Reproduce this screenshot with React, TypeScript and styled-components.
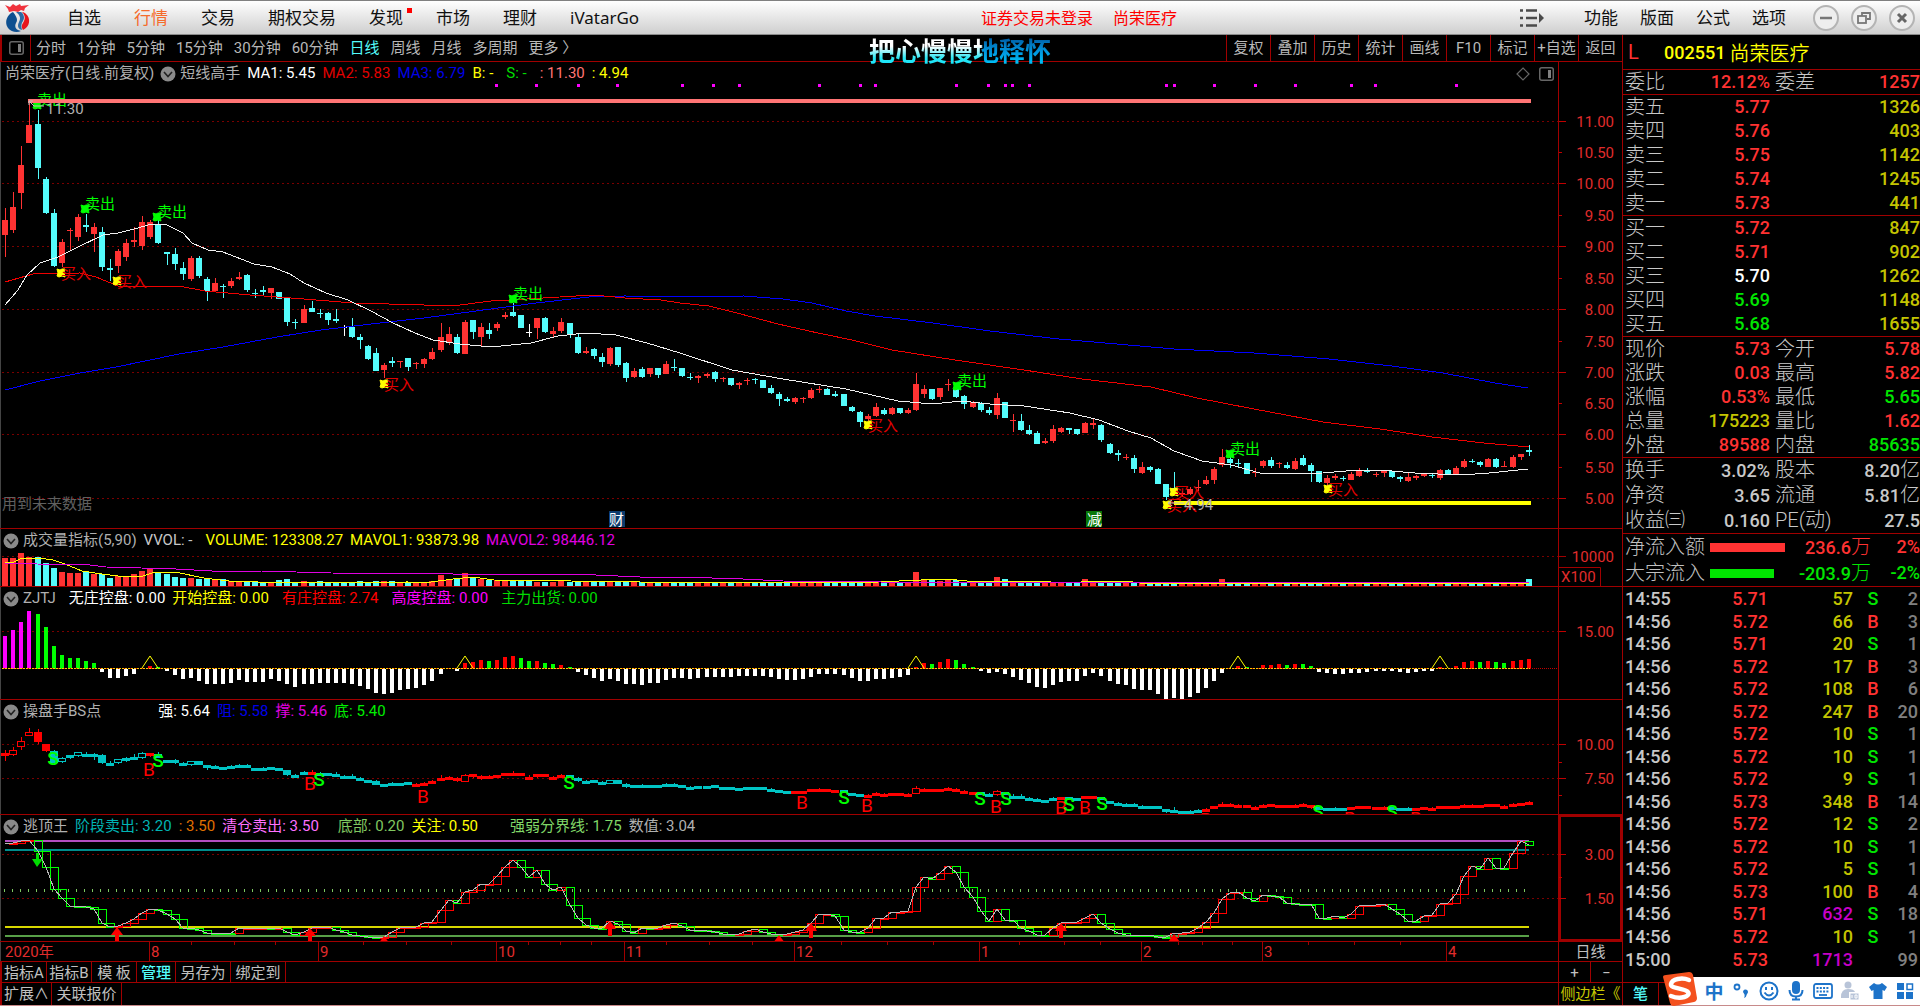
import React from "react";
import styled, { createGlobalStyle } from "styled-components";

/* ---------- palette ---------- */
const LINE = "#a00000";
const UP = "#ff3232";
const DOWN = "#54fcfc";
const GRID = "#7a0000";
const SANS = `Roboto, "Noto Sans CJK SC", "Liberation Sans", sans-serif`;

const Global = createGlobalStyle`
  * { box-sizing: border-box; }
  html, body { margin: 0; background: #000; overflow: hidden; }
  body { font-family: ${SANS}; font-size: 15px; color: #c0c0c0; }
  button { font: inherit; color: inherit; background: none; border: 0; padding: 0; margin: 0; cursor: pointer; white-space: nowrap; }
  svg { display: block; }
`;

/* ---------- market data: [high, body top, body bottom, low, kind] ---------- */
type Candle = [number, number, number, number, string];
const RAW = `208,220,235,257,r 192,207,230,233,r 146,165,193,209,r 102,125,143,143,r 110,124,168,179,c 177,179,213,214,c 209,213,266,267,c 239,242,263,267,r 228,230,231,250,r 214,217,237,241,r
214,225,227,232,c 223,227,234,252,r 227,232,267,271,c 259,268,270,281,c 249,251,266,273,r 239,243,257,261,r 227,240,242,247,r 216,222,246,250,r 220,222,237,239,r 218,224,243,244,c
252,252,254,265,c 248,254,264,270,c 262,268,274,280,c 256,258,279,281,r 256,258,276,278,c 277,279,291,301,c 278,283,291,291,r 284,286,287,298,c 278,281,286,288,r 272,277,279,280,r
274,275,290,292,c 289,293,294,298,c 286,290,292,296,c 288,288,293,299,r 292,292,299,299,c 298,298,322,326,c 319,322,323,329,c 305,309,323,323,r 301,308,312,312,c 309,313,314,318,c
312,313,320,325,c 309,319,321,323,c 325,327,328,336,w 318,327,337,338,c 334,337,340,349,c 345,346,359,360,c 348,353,371,371,c 363,365,370,378,r 357,361,363,367,c 361,361,362,368,r
358,358,367,371,c 362,363,364,369,r 358,359,364,368,r 348,352,359,360,r 323,337,350,352,r 327,334,343,345,r 334,337,353,354,c 320,322,354,354,r 320,320,332,339,c 323,327,337,346,r
323,330,334,339,c 322,324,328,331,r 312,315,317,319,r 303,312,316,317,c 315,315,328,328,c 324,332,333,337,w 318,318,328,339,r 317,318,332,333,c 327,331,334,337,r 318,322,331,333,r
323,323,335,338,c 333,337,353,354,c 347,351,353,354,r 348,349,356,359,c 353,357,362,367,c 347,348,364,366,r 347,347,365,367,c 362,363,378,382,c 368,371,377,378,r 367,369,377,378,c
368,368,374,377,r 368,368,375,378,c 361,364,374,374,r 359,367,368,371,c 368,368,376,377,c 373,377,378,380,c 375,376,378,383,r 373,374,376,378,r 371,372,379,382,c 377,378,379,382,r
378,378,385,386,c 382,383,385,389,r 378,380,381,385,r 378,379,380,384,c 380,380,388,388,c 385,388,393,394,c 392,394,399,406,c 397,399,401,402,c 397,398,402,404,r 397,398,399,403,r
388,390,398,399,r 386,389,390,393,r 388,389,395,395,c 391,394,396,397,c 394,394,406,406,c 406,407,411,412,c 411,412,422,427,c 414,416,419,421,r 403,407,416,417,r 408,410,414,415,c
407,408,414,415,r 408,408,413,414,c 408,410,413,414,r 373,384,410,411,r 385,389,394,398,r 389,389,399,400,c 388,388,397,400,r 379,384,385,391,r 383,389,397,398,c 395,396,404,409,c
401,402,407,408,r 402,403,410,412,c 407,410,413,415,c 393,398,415,419,r 402,402,418,418,c 414,420,421,432,r 414,421,430,431,c 425,430,434,435,c 431,433,444,444,c 438,441,443,444,r
425,429,441,443,r 427,428,432,433,r 428,428,430,434,c 429,429,434,435,c 422,423,433,433,r 419,423,425,429,r 424,425,440,442,c 443,444,453,454,c 450,453,455,461,c 454,457,458,460,r
455,458,469,473,c 462,467,473,474,r 466,467,470,472,c 468,469,484,484,c 484,484,497,500,c 472,488,492,493,c 491,493,494,497,r 487,489,494,495,r 480,487,488,491,r 476,480,484,485,r
467,469,480,484,r 449,457,465,467,r 453,459,463,468,c 459,463,464,468,c 463,463,474,474,c 468,472,473,477,r 460,461,466,468,r 457,460,466,468,c 462,463,464,468,r 462,465,468,469,c
458,461,469,470,r 455,458,465,466,c 463,465,471,482,c 471,471,482,483,c 475,478,483,487,r 474,476,478,480,r 476,478,479,481,c 472,474,480,480,r 468,470,476,477,r 468,470,472,473,c
472,474,475,477,r 470,471,473,477,r 471,471,477,478,c 476,477,479,482,c 472,477,481,482,r 475,476,478,480,r 473,474,476,477,r 473,475,476,478,c 469,470,478,480,r 469,470,474,475,c
466,468,474,475,r 459,461,467,468,r 459,461,462,463,c 461,462,465,467,c 458,459,467,467,r 458,459,467,468,c 461,466,467,467,r 455,457,467,468,r 454,454,457,460,r 445,450,452,456,c`;
const CANDLES: Candle[] = RAW.trim().split(/\s+/).map((s) => {
  const p = s.split(",");
  return [+p[0], +p[1], +p[2], +p[3], p[4]];
});
const xAt = (i: number) => Math.round(5.3 + 8.06 * i);

const MA1 = "5,305 18,290 27,275 40,263 58,257 76,248 103,235 118,233 134,229 152,224 167,225 183,233 192,243 208,250 223,252 254,264 272,267 290,274 304,283 326,293 348,300 371,311 393,323 415,333 433,340 460,344 491,347 531,343 558,336 585,333 616,335 647,343 680,353 732,370 783,379 846,389 898,401 933,404 961,401 990,404 1024,406 1070,413 1099,420 1128,431 1151,438 1174,451 1202,461 1231,465 1260,473 1288,474 1323,473 1357,470 1380,470 1415,473 1461,475 1489,473 1528,469";
const MA2 = "5,282 33,274 80,273 96,277 118,286 179,286 205,291 250,295 304,299 353,303 424,305 460,305 491,301 527,299 576,296 594,295 625,298 661,300 680,303 709,306 737,313 778,324 818,333 852,340 892,350 955,360 1024,370 1082,379 1151,387 1197,398 1254,409 1323,422 1380,429 1432,437 1484,443 1529,447";
const MA3 = "5,390 40,381 80,373 116,367 179,354 223,347 277,337 321,330 371,324 424,318 491,309 536,303 589,297 625,296 702,297 744,296 783,299 812,303 846,311 875,316 933,323 990,331 1059,339 1174,349 1254,353 1329,359 1392,366 1443,373 1495,383 1528,388";
const DOTS = [496, 536, 578, 617, 682, 713, 739, 819, 860, 875, 956, 988, 1005, 1012, 1029, 1166, 1174, 1214, 1255, 1295, 1351, 1375, 1456];
const SELLS = [[37, 105], [85, 209], [157, 217], [513, 299], [957, 386], [1230, 454]];
const BUYS = [[61, 273], [117, 281], [384, 384], [868, 425], [1174, 492], [1167, 505], [1328, 489]];

const VOL_HEAD = [28, 28, 33, 29, 29, 23, 18, 14, 13, 13, 14, 12, 12, 8, 10, 10, 12, 15, 17, 14, 12, 9, 8, 8, 7, 7, 6, 7, 5, 4, 5, 4, 3, 4, 6, 7, 4, 5, 4, 5, 4, 4, 3, 4, 5, 4, 5, 5, 5, 4, 4, 4, 4, 5, 11, 7, 7, 13, 9, 7, 6, 6, 6, 6, 5, 5];
const VOL_PEAKS: Record<number, number> = { 113: 14, 114: 6, 115: 6, 116: 5, 117: 7, 118: 6, 123: 9, 124: 7, 134: 7, 135: 5, 151: 7, 189: 7 };
const volumeAt = (i: number) => VOL_HEAD[i] ?? VOL_PEAKS[i] ?? 3 + ((i * 5) % 3 === 0 ? 1 : 0) + (i > 66 && i < 80 ? 1 : 0);
const MAVOL1 = "5,563 14,562 20,559 38,558 53,560 65,564 82,571 102,574 118,576 143,576 155,572 175,572 204,578 229,581 286,583 408,582 424,583 453,579 473,577 494,580 571,581 640,582 680,583 800,582 878,582 921,580 947,579 967,581 1041,581 1060,583 1102,581 1125,581 1140,583 1529,583";
const MAVOL2 = "5,563 37,564 90,565 106,567 176,569 212,571 261,571 331,573 453,574 596,575 640,577 680,577 743,579 783,581 881,582 1529,582";

const CONTROL = `33m 39m 47m 58m 55g 42g 23g 14g 11g 11g 8g 6g -3 -9 -9 -7 -5 0 3r 2g -2 -6 -10 -9 -12 -15 -15 -15 -14 -11 -13 -13 -13 -10 -12 -15 -18 -15 -15 -14 -14 -14 -14 -15 -17 -20 -24 -25 -24 -21 -20 -19 -16 -12 -5 0 -2 6r 7r 9r 8g 9r 12r 13r 11g 8g 8r 6g 5g 4r 2g -3 -6 -9 -12 -10 -12 -15 -15 -16 -14 -14 -11 -9 -9 -10 -9 -8 -8 -8 -8 -7 -7 -7 -7 -8 -10 -11 -11 -10 -8 -5 -5 -5 -6 -9 -12 -12 -10 -10 -9 -8 -6 2r 6r 5g 7r 10r 9g 5g 2g -2 -4 -3 -5 -8 -11 -14 -18 -19 -16 -13 -12 -12 -7 -4 -7 -12 -15 -16 -20 -21 -21 -25 -30 -29 -30 -28 -24 -19 -12 -4 0 3r 2g 0 4r 4r 5r 4g 5r 5g 3g -3 -4 -5 -5 -4 -4 -3 -2 -2 -2 -3 -4 -3 -2 -2 2r 0 3r 7r 8r 7g 8r 7g 6g 8r 9r 10r`.split(" ");
const CONTROL_COLORS: Record<string, string> = { m: "#f0f", g: "#0f0", r: "#f00" };
const PEAKS = [18, 57, 113, 153, 178];

const BS_RED = [[0, 5], [18, 18], [38, 38], [51, 69], [98, 103], [107, 120], [123, 123], [131, 131], [134, 135], [149, 162], [167, 171], [175, 189]];
const B_MARKS = [[149, 769], [310, 783], [423, 796], [802, 802], [867, 805], [996, 806], [1061, 807], [1085, 807], [1206, 819], [1350, 818], [1416, 818]];
const S_MARKS = [[53, 758], [158, 760], [319, 779], [569, 782], [844, 797], [980, 798], [1006, 798], [1069, 804], [1102, 803], [1318, 811], [1392, 811]];

const ESCAPE = [27, 27, 25, 24, 35, 51, 73, 82, 90, 90, 91, 93, 107, 111, 110, 107, 103, 97, 93, 94, 98, 103, 112, 112, 114, 117, 117, 117, 117, 112, 112, 112, 112, 113, 112, 116, 119, 116, 112, 111, 111, 114, 116, 119, 120, 121, 122, 121, 116, 112, 111, 111, 107, 106, 94, 84, 87, 76, 74, 68, 68, 60, 51, 44, 51, 61, 54, 68, 74, 71, 89, 102, 109, 112, 112, 105, 108, 115, 117,
  112, 113, 112, 109, 107, 110, 114, 114, 115, 116, 118, 119, 118, 115, 113, 116, 118, 119, 118, 116, 114, 107, 98, 98, 100, 114, 116, 116, 112, 102, 102, 96, 96, 95, 71, 61, 63, 57, 50, 56, 71, 81, 95, 105, 93, 104, 104, 112, 115, 119, 119, 112, 107, 106, 106, 102, 98, 107, 113, 117, 119, 119, 119, 119, 121, 121, 117, 117, 116, 112, 106, 97, 83, 77, 76, 82, 85, 79, 80, 81, 87, 88, 88, 88, 102, 102, 100, 102, 98, 90, 89, 89, 88, 93, 98, 105, 105, 100, 99, 88, 87, 78, 60, 50, 53, 42, 52, 52, 37, 25, 29].map((v) => v + 816);
const ARROWS = [[117, 927, 941], [310, 928, 941], [384, 936, 941], [610, 921, 936], [779, 935, 941], [811, 923, 938], [1061, 923, 938], [1174, 934, 941]];

/* ---------- layout ---------- */
const App_ = styled.div`
  height: 100vh; display: flex; flex-direction: column; background: #000; border-bottom: 1px solid #c88a8a;
`;
const TitleBar = styled.header`
  height: 35px; flex: none; display: flex; align-items: center; padding: 0 5px;
  background: linear-gradient(#fff, #e4e4e4 55%, #cfcfcf); border-top: 1px solid #808080; border-bottom: 1px solid #8a8a8a;
  color: #111; font-family: "Noto Sans", "Noto Sans CJK SC", sans-serif; font-size: 17px; line-height: 24px;
`;
const Menu = styled.nav`display: flex; gap: 33px; margin-left: 36px;`;
const MenuItem = styled.button<{ $on?: boolean; $dot?: boolean }>`
  position: relative; color: ${(p) => (p.$on ? "#f56b2c" : "#111")};
  ${(p) => p.$dot && `&::after { content: ""; position: absolute; right: -9px; top: 2px; width: 5px; height: 5px; background: #f00; }`}
`;
const Notice = styled.div`
  flex: 1; display: flex; justify-content: center; gap: 20px; color: #f00; font-size: 16px;
`;
const RightMenu = styled.nav`display: flex; gap: 22px; margin-left: 39px;`;
const WinButtons = styled.div`display: flex; gap: 12px; margin-left: 27px;`;
const WinButton = styled.button`
  width: 26px; height: 26px; border-radius: 50%; border: 2px solid #b4b4b4; background: #eee;
  display: grid; place-items: center;
`;
const Body = styled.div`flex: 1; min-height: 0; display: flex;`;
const Left = styled.main`flex: 1; min-width: 0; display: flex; flex-direction: column; box-shadow: inset 1px 0 #444;`;

const Toolbar = styled.div`
  height: 27px; flex: none; display: flex; border-bottom: 1px solid ${LINE}; border-left: 2px solid ${LINE}; line-height: 26px;
`;
const IconCell = styled.button`width: 29px; display: grid; place-items: center; border-right: 1px solid ${LINE};`;
const Periods = styled.div`display: flex; gap: 11px; padding-left: 5px; flex: 1;`;
const Period = styled.button<{ $on?: boolean }>`color: ${(p) => (p.$on ? DOWN : "#b8b8b8")};`;
const Tool = styled.button`width: 44px; border-left: 1px solid ${LINE}; color: #b8b8b8;`;

const LyricLayer = styled.div`
  position: absolute; left: 0; right: 0; top: 31px; display: flex; justify-content: center; pointer-events: none;
`;
const Lyric = styled.span`
  font: 700 26px/38px "Noto Sans CJK SC", sans-serif; color: transparent;
  background: linear-gradient(#fff 40%, #2fe8f4 70%, #00e0ff) left / 62% 100% no-repeat,
    linear-gradient(#0060a8 20%, #0098e0 55%, #00d0ff) right / 38% 100% no-repeat;
  background-clip: text; -webkit-background-clip: text;
`;

const Pane = styled.section<{ $h?: number }>`
  ${(p) => (p.$h ? `height: ${p.$h}px; flex: none;` : "flex: 1; min-height: 0;")}
  display: flex; border-bottom: 1px solid ${LINE};
`;
const PaneBody = styled.div`
  flex: 1; min-width: 0; display: grid; grid-template: minmax(0, 1fr) / minmax(0, 1fr);
  & > * { grid-area: 1 / 1; }
`;
const PlotSvg = styled.svg`width: 100%; height: 100%; overflow: hidden; font-family: ${SANS};`;
const Axis = styled.aside<{ $picked?: boolean }>`
  width: 64px; flex: none; border-left: 1px solid ${LINE};
  ${(p) => p.$picked && `box-shadow: inset 0 0 0 2px ${LINE};`}
`;
const PaneHead = styled.div`
  display: flex; align-items: center; align-self: start; height: 23px; white-space: pre; line-height: 23px; z-index: 1;
  padding-left: 3px;
`;
const Name = styled.span<{ $pad?: number }>`color: #b0b0b0; margin-left: ${(p) => p.$pad ?? 4}px;`;
const Reading = styled.span<{ $c: string; $gap?: number }>`color: ${(p) => p.$c}; margin-left: ${(p) => p.$gap ?? 7}px;`;
const HeadTools = styled.div`margin-left: auto; display: flex; gap: 9px; padding-right: 4px; align-items: center;`;
const FoldButton = styled.button<{ $gap?: number }>`margin-left: ${(p) => p.$gap ?? 0}px;`;

const Strip = styled.div<{ $h: number }>`
  height: ${(p) => p.$h}px; flex: none; display: flex; border-bottom: 1px solid ${LINE}; line-height: ${(p) => p.$h + 1}px;
  &:last-child { border-bottom: 0; }
`;
const StripBody = styled.div`flex: 1; min-width: 0; display: flex; border-left: 2px solid ${LINE};`;
const Tab = styled.button<{ $w: number; $on?: boolean }>`
  width: ${(p) => p.$w}px; border-right: 1px solid ${LINE}; color: ${(p) => (p.$on ? DOWN : "#c0c0c0")};
  font-weight: ${(p) => (p.$on ? 500 : 400)};
`;
const Corner = styled.div`width: 64px; flex: none; display: flex; justify-content: center; border-left: 1px solid ${LINE};`;
const Zoom = styled.button`flex: 1; & + & { border-left: 1px solid ${LINE}; }`;
const Side = styled.button`color: #c8c800;`;

/* ---------- quote panel ---------- */
const Quote = styled.aside`
  width: 298px; flex: none; border-left: 1px solid ${LINE}; display: flex; flex-direction: column; font-size: 18px; font-weight: 500;
`;
const Stock = styled.h1`
  height: 35px; flex: none; margin: 0; display: flex; align-items: center; border-bottom: 1px solid ${LINE};
  font-size: 18px; font-weight: 500; color: #ff0; padding-left: 5px;
`;
const Flag = styled.span`color: ${UP}; font-size: 20px; font-weight: 400; width: 36px;`;
const StockName = styled.span`font-size: 20px; font-weight: 350; margin-left: 4px;`;
const Sheet = styled.table`
  width: 100%; flex: none; border-collapse: separate; border-spacing: 0; table-layout: fixed; border-bottom: 1px solid ${LINE};
  th, td { padding: 0; white-space: nowrap; text-align: right; overflow: visible; }
  th { text-align: left; font-size: 20px; font-weight: 300; color: #c8c8c8; padding-left: 2px; }
  td + th { padding-left: 5px; }
`;
const Row = styled.tr<{ $h: number }>`height: ${(p) => p.$h}px; line-height: ${(p) => p.$h}px;`;
const Val = styled.td<{ $c: string }>`color: ${(p) => p.$c};`;
const Unit = styled.span`font-size: 20px; font-weight: 300;`;
const FlowRow = styled.div`height: 26px; display: flex; align-items: center; padding-left: 2px; line-height: 26px;`;
const FlowBox = styled.div`border-bottom: 1px solid ${LINE}; flex: none;`;
const FlowName = styled.span`font-size: 20px; font-weight: 300; width: 85px;`;
const FlowBar = styled.span<{ $c: string }>`height: 9px; background: ${(p) => p.$c};`;
const FlowVal = styled.span<{ $c: string }>`margin-left: auto; color: ${(p) => p.$c};`;
const FlowPct = styled.span<{ $c: string }>`width: 49px; text-align: right; color: ${(p) => p.$c};`;
const Ticks = styled.div`flex: 1; min-height: 0; display: flex; padding: 1px 0 11px;`;
const TickTable = styled.table`
  flex: 1; border-collapse: collapse; table-layout: fixed; line-height: 20px;
  td { padding: 0; text-align: right; }
  td:first-child { text-align: left; padding-left: 2px; color: #c8c8c8; }
  td:nth-child(4) { text-align: center; }
  td:last-child { padding-right: 2px; color: #808080; }
`;
const PenTab = styled.button`width: 36px; color: ${DOWN}; border-right: 1px solid ${LINE};`;
const PenRow = styled.div`height: 23px; flex: none; border-top: 1px solid ${LINE}; display: flex; font-size: 15px; line-height: 23px;`;

const Ime = styled.div`
  position: absolute; right: 0; bottom: 1px; height: 28px; width: 249px; background: #fff; display: flex; align-items: center;
  justify-content: space-between; padding: 0 3px 0 31px; color: #1d73c9;
`;
const ImeLogo = styled.svg`position: absolute; left: -9px; bottom: -1px;`;
const ImeButton = styled.button`width: 24px; height: 24px; display: grid; place-items: center; font: 700 19px/24px "Noto Sans CJK SC", sans-serif;`;

/* ---------- drawing helpers ---------- */
const Plot = ({ top, children }: { top: number; children: React.ReactNode }) => (
  <PlotSvg><g transform={`translate(0 ${-top})`}>{children}</g></PlotSvg>
);
const Grid = ({ ys }: { ys: number[] }) => (
  <>{ys.map((y) => <line key={y} x1="2" x2="1558" y1={y + 0.5} y2={y + 0.5} stroke={GRID} strokeDasharray="2 3" shapeRendering="crispEdges" />)}</>
);
const AxisPlot = ({ top, marks, minor = [] }: { top: number; marks: [number, string][]; minor?: number[] }) => (
  <Plot top={top}>
    {marks.map(([y, t]) => (
      <g key={y}>
        <line x1="0" x2={t.endsWith(".50") && top === 62 ? 3 : 7} y1={y + 0.5} y2={y + 0.5} stroke="#c00000" />
        <text x="55" y={y + 6} textAnchor="end" fill="#e02c2c" fontSize="15">{t}</text>
      </g>
    ))}
    {minor.map((y) => <line key={y} x1="0" x2="3" y1={y + 0.5} y2={y + 0.5} stroke="#c00000" />)}
  </Plot>
);
const Curve = ({ pts, c }: { pts: string; c: string }) => (
  <polyline points={pts} fill="none" stroke={c} strokeWidth="1" shapeRendering="crispEdges" />
);
const Fold = ({ gap }: { gap?: number }) => (
  <FoldButton $gap={gap} aria-label="指标菜单">
    <svg width="16" height="16" viewBox="0 0 16 16"><circle cx="8" cy="8" r="7.5" fill="#8a8a8a" /><path d="M4 6l4 4.5L12 6" fill="none" stroke="#222" strokeWidth="1.6" /></svg>
  </FoldButton>
);
const PanelGlyph = () => (
  <svg width="15" height="14" viewBox="0 0 15 14"><rect x=".75" y=".75" width="13.5" height="12.5" rx="2" fill="none" stroke="#666" strokeWidth="1.5" /><rect x="9" y="3" width="3" height="8" fill="#808080" /></svg>
);
const Burst = ({ x, y, c }: { x: number; y: number; c: string }) => (
  <path transform={`translate(${x} ${y})`} d="M-4-4L-1-3L1-4L4-4L3-1L4 4L1 3L-2 4L-4 3L-3 0Z" fill={c} stroke={c} strokeWidth="1" />
);

const MainPlot = () => (
  <Plot top={62}>
    <Grid ys={[121, 183, 246, 309, 372, 434, 498]} />
    {DOTS.map((x) => <rect key={x} x={x - 1} y="84" width="3" height="3" fill="#f0f" />)}
    <g shapeRendering="crispEdges">
      {CANDLES.map(([h, t, b, l, k], i) => {
        const c = k === "r" ? UP : k === "c" ? DOWN : "#fff";
        const x = xAt(i);
        return <g key={i} fill={c}><rect x={x} y={h} width="1" height={Math.max(1, l - h)} /><rect x={x - 3} y={t} width="6" height={Math.max(1, b - t)} /></g>;
      })}
    </g>
    <Curve pts={MA3} c="#0000ff" />
    <Curve pts={MA2} c="#f00000" />
    <Curve pts={MA1} c="#f0f0f0" />
    {SELLS.map(([x, y]) => <g key={x}><Burst x={x} y={y} c="#0f0" /><text x={x} y={y} fill="#0f0" fontSize="15">卖出</text></g>)}
    {BUYS.map(([x, y]) => <g key={x}><Burst x={x} y={y} c="#ff0" /><text x={x} y={y + 6} fill="#e00000" fontSize="15">买入</text></g>)}
    <rect x="28" y="99" width="1503" height="4" fill="#ff7474" />
    <rect x="1174" y="501" width="357" height="4" fill="#ff0" />
    <path d="M29 101l5 5M29 101h4M29 101v4M34 106h10" stroke="#c0c0c0" fill="none" />
    <path d="M1168 503h16M1168 503l4-3M1168 503l4 3" stroke="#c0c0c0" fill="none" />
    <text x="46" y="114" fill="#b0b0b0" fontSize="15">11.30</text>
    <text x="1184" y="510" fill="#b0b0b0" fontSize="15">4.94</text>
    <text x="2" y="509" fill="#606060" fontSize="15">用到未来数据</text>
    <rect x="609" y="511" width="16" height="16" fill="#0c3c6e" />
    <text x="609" y="525" fill="#fff" fontSize="15">财</text>
    <rect x="1086" y="511" width="16" height="16" fill="#087808" />
    <text x="1087" y="525" fill="#fff" fontSize="15">减</text>
  </Plot>
);

const VolumePlot = () => (
  <Plot top={529}>
    <Grid ys={[556]} />
    <g shapeRendering="crispEdges">
      {CANDLES.map((k, i) => <rect key={i} x={xAt(i) - 3} y={586 - volumeAt(i)} width="6" height={volumeAt(i)} fill={k[4] === "r" ? UP : DOWN} />)}
    </g>
    <Curve pts={MAVOL1} c="#ff0" />
    <Curve pts={MAVOL2} c="#e000e0" />
  </Plot>
);

const ControlPlot = () => (
  <Plot top={587}>
    <Grid ys={[631]} />
    <g shapeRendering="crispEdges">
      {CONTROL.map((s, i) => {
        const v = parseInt(s, 10);
        const c = CONTROL_COLORS[s.slice(-1)] ?? "#fff";
        return v === 0 ? null : <rect key={i} x={xAt(i) - 2} y={v > 0 ? 669 - v : 669} width="4" height={Math.abs(v)} fill={c} />;
      })}
      <line x1="2" x2="1558" y1="668.5" y2="668.5" stroke="#c00000" strokeDasharray="1 1" />
      <line x1="2" x2="1530" y1="668.5" y2="668.5" stroke="#ffc800" strokeDasharray="2 1" />
    </g>
    {PEAKS.map((i) => <path key={i} d={`M${xAt(i) - 8} 668L${xAt(i)} 656L${xAt(i) + 8} 668`} fill="none" stroke="#ff0" />)}
  </Plot>
);

const bsY = (y: number) => Math.round(745 + (y - 183.5) * 0.2145);
const BsPlot = () => (
  <Plot top={700}>
    <Grid ys={[744, 778]} />
    <g shapeRendering="crispEdges">
      {CANDLES.map(([h, t, b, l, k], i) => {
        const c = BS_RED.some(([a, z]) => i >= a && i <= z) ? "#f00" : "#00c4c4";
        const x = xAt(i);
        const height = Math.max(3, bsY(b) - bsY(t));
        const hollow = k === "r" && height > 3;
        return (
          <g key={i}>
            <rect x={x} y={bsY(h)} width="1" height={Math.max(2, bsY(l) - bsY(h))} fill={c} />
            {hollow
              ? <rect x={x - 3.5} y={bsY(t) + 0.5} width="7" height={height - 1} fill="#000" stroke={c} />
              : <rect x={x - 4} y={bsY(t)} width="8" height={height} fill={c} />}
          </g>
        );
      })}
    </g>
    {B_MARKS.map(([x, y]) => <text key={x} x={x} y={y + 7} textAnchor="middle" fill="#f00" fontSize="19">B</text>)}
    {S_MARKS.map(([x, y]) => <text key={x} x={x} y={y + 7} textAnchor="middle" fill="#0f0" fontSize="19" fontWeight="500">S</text>)}
  </Plot>
);

const EscapePlot = () => {
  let tone = "#f00";
  return (
    <Plot top={815}>
      <Grid ys={[854, 898]} />
      <rect x="5" y="840" width="1524" height="2" fill="#b44ec0" />
      <rect x="5" y="849" width="1524" height="2" fill="#008c8c" />
      <line x1="4" x2="1529" y1="890.5" y2="890.5" stroke="#7cc860" strokeWidth="3" strokeDasharray="1 7" shapeRendering="crispEdges" />
      <rect x="5" y="926" width="1524" height="2" fill="#d8d800" />
      <rect x="5" y="935" width="1524" height="2" fill="#58a048" />
      <g shapeRendering="crispEdges" fill="none">
        {ESCAPE.map((y, i) => {
          if (i === 0) return null;
          const p = ESCAPE[i - 1];
          if (y < p) tone = "#f00";
          if (y > p) tone = "#0f0";
          return <rect key={i} x={xAt(i) - 3.5} y={Math.min(y, p) + 0.5} width="8" height={Math.max(1, Math.abs(y - p))} stroke={tone} />;
        })}
      </g>
      <Curve pts={ESCAPE.map((y, i) => `${xAt(i)},${y}`).join(" ")} c="#b8b8b8" />
      {ARROWS.map(([x, t, b]) => <path key={x} d={`M${x} ${t}l6 8h-4V${Math.max(b, t + 8)}h-4V${t + 8}h-4z`} fill="#f00" />)}
      <path d="M37 867l-5-8h4v-6h3v6h4z" fill="#0d0" />
    </Plot>
  );
};

const MONTHS: [number, string][] = [[149, "8"], [318, "9"], [496, "10"], [624, "11"], [794, "12"], [979, "1"], [1141, "2"], [1262, "3"], [1446, "4"]];
const WEEKS = [191, 234, 275, 363, 406, 451, 528, 560, 591, 666, 709, 752, 841, 887, 933, 1019, 1064, 1100, 1178, 1202, 1232, 1308, 1354, 1400];
const DatePlot = () => (
  <Plot top={942}>
    <text x="5" y="957" fill="#e02c2c" fontSize="15">2020年</text>
    {MONTHS.map(([x, t]) => <g key={x}><line x1={x + 0.5} x2={x + 0.5} y1="942" y2="961" stroke={LINE} /><text x={x + 2} y="957" fill="#e02c2c" fontSize="15">{t}</text></g>)}
    {WEEKS.map((x) => <line key={x} x1={x + 0.5} x2={x + 0.5} y1="942" y2="945" stroke={LINE} />)}
  </Plot>
);

/* ---------- quote rows ---------- */
const R = UP, G = "#00e600", Y = "#c4c400", W = "#fff", N = "#c8c8c8", P = "#c800c8";
const ASKS = [["卖五", "5.77", "1326"], ["卖四", "5.76", "403"], ["卖三", "5.75", "1142"], ["卖二", "5.74", "1245"], ["卖一", "5.73", "441"]].map((r) => [...r, R]);
const BIDS = [["买一", "5.72", "847", R], ["买二", "5.71", "902", R], ["买三", "5.70", "1262", W], ["买四", "5.69", "1148", G], ["买五", "5.68", "1655", G]];
const STATS = [["现价", "5.73", R, "今开", "5.78", R], ["涨跌", "0.03", R, "最高", "5.82", R], ["涨幅", "0.53%", R, "最低", "5.65", G], ["总量", "175223", Y, "量比", "1.62", R], ["外盘", "89588", R, "内盘", "85635", G]];
const FUNDS = [["换手", "3.02%", N, "股本", "8.20亿", N], ["净资", "3.65", N, "流通", "5.81亿", N], ["收益㈢", "0.160", N, "PE(动)", "27.5", N]];
const TICKS = `14:55 5.71 57 S 2|14:56 5.72 66 B 3|14:56 5.71 20 S 1|14:56 5.72 17 B 3|14:56 5.72 108 B 6|14:56 5.72 247 B 20|14:56 5.72 10 S 1|14:56 5.72 10 S 1|14:56 5.72 9 S 1|14:56 5.73 348 B 14|14:56 5.72 12 S 2|14:56 5.72 10 S 1|14:56 5.72 5 S 1|14:56 5.73 100 B 4|14:56 5.71 632 S 18|14:56 5.72 10 S 1|15:00 5.73 1713 - 99`.split("|").map((s) => s.split(" "));

const withUnit = (s: string) => (s.endsWith("亿") || s.endsWith("万") ? <>{s.slice(0, -1)}<Unit>{s.slice(-1)}</Unit></> : s);
const Cols = () => <colgroup><col style={{ width: 65 }} /><col style={{ width: 82 }} /><col style={{ width: 60 }} /><col /></colgroup>;
const Book = ({ rows }: { rows: string[][] }) => (
  <Sheet><Cols /><tbody>{rows.map(([n, p, v, c]) => <Row key={n} $h={24}><th>{n}</th><Val $c={c}>{p}</Val><td /><Val $c={Y}>{v}</Val></Row>)}</tbody></Sheet>
);
const Pairs = ({ rows, h }: { rows: string[][]; h: number }) => (
  <Sheet><Cols /><tbody>{rows.map(([a, b, c, d, e, f]) => <Row key={a} $h={h}><th>{a}</th><Val $c={c}>{b}</Val><th>{d}</th><Val $c={f}>{withUnit(e)}</Val></Row>)}</tbody></Sheet>
);

const BLUE = "#1d73c9";

export default function App() {
  return (
    <App_>
      <Global />
      <TitleBar>
        <svg width="26" height="30" viewBox="0 0 26 30">
          <path d="M0 2l5 2 3-3 3 2 4-2 1 2 8-1-4 3-1 3-3-1-3 2-4-1-5 1-1-3z" fill="#f0323c" />
          <path d="M8 9C2 12-1 19 3 25c3 4 9 5 13 3-5-1-7-4-5-8 2-3 1-6-3-11z" fill="#0d4f90" />
          <path d="M11 9c4 3 5 6 3 10s-1 7 3 8c-1-4-1-6 1-9s1-7-2-9z" fill="#2c6aa5" />
          <path d="M17 9c4 4 3 8 1 11s-1 5 0 7c7-3 8-12 3-16-1-1-2-2-4-2z" fill="#e8141c" />
        </svg>
        <Menu>
          <MenuItem>自选</MenuItem><MenuItem $on>行情</MenuItem><MenuItem>交易</MenuItem><MenuItem>期权交易</MenuItem>
          <MenuItem $dot>发现</MenuItem><MenuItem>市场</MenuItem><MenuItem>理财</MenuItem><MenuItem>iVatarGo</MenuItem>
        </Menu>
        <Notice><span>证券交易未登录</span><span>尚荣医疗</span></Notice>
        <MenuItem aria-label="列表">
          <svg width="26" height="20" viewBox="0 0 26 20"><path d="M1 2.500h3M7 2.500h11M1 10h3M7 10h11M1 17.500h3M7 17.500h11" stroke="#4a4a4a" strokeWidth="2.500" /><path d="M20 5l5 5-5 5z" fill="#4a4a4a" /></svg>
        </MenuItem>
        <RightMenu><MenuItem>功能</MenuItem><MenuItem>版面</MenuItem><MenuItem>公式</MenuItem><MenuItem>选项</MenuItem></RightMenu>
        <WinButtons>
          <WinButton aria-label="最小化"><svg width="14" height="14"><path d="M1 7h12" stroke="#777" strokeWidth="2.500" /></svg></WinButton>
          <WinButton aria-label="还原"><svg width="14" height="14" fill="none" stroke="#777" strokeWidth="1.800"><path d="M5 5V2h8v6h-3" /><rect x="1" y="5" width="8" height="7" /></svg></WinButton>
          <WinButton aria-label="关闭"><svg width="14" height="14"><path d="M3 3l8 8M11 3l-8 8" stroke="#666" strokeWidth="3" /></svg></WinButton>
        </WinButtons>
      </TitleBar>
      <Body>
        <Left>
          <Toolbar>
            <IconCell aria-label="侧栏"><PanelGlyph /></IconCell>
            <Periods>
              {["分时", "1分钟", "5分钟", "15分钟", "30分钟", "60分钟", "日线", "周线", "月线", "多周期"].map((t) => <Period key={t} $on={t === "日线"}>{t}</Period>)}
              <Period>更多 〉</Period>
            </Periods>
            {["复权", "叠加", "历史", "统计", "画线", "F10", "标记", "+自选", "返回"].map((t) => <Tool key={t}>{t}</Tool>)}
          </Toolbar>

          <Pane>
            <PaneBody>
              <MainPlot />
              <PaneHead>
                <Name $pad={2}>尚荣医疗(日线.前复权)</Name><Fold gap={6} /><Name>短线高手</Name>
                <Reading $c="#fff">MA1: 5.45</Reading><Reading $c="#e00000">MA2: 5.83</Reading><Reading $c="#0000e8">MA3: 6.79</Reading>
                <Reading $c="#ff0">B: -</Reading><Reading $c="#0d0" $gap={13}>S: -</Reading>
                <Reading $c="#ff7474" $gap={13}>: 11.30</Reading><Reading $c="#ff0">: 4.94</Reading>
                <HeadTools>
                  <svg width="14" height="14"><path d="M7 1l6 6-6 6-6-6z" fill="none" stroke="#666" strokeWidth="1.200" /></svg>
                  <PanelGlyph />
                </HeadTools>
              </PaneHead>
            </PaneBody>
            <Axis><AxisPlot top={62} marks={[[121, "11.00"], [152, "10.50"], [183, "10.00"], [215, "9.50"], [246, "9.00"], [278, "8.50"], [309, "8.00"], [341, "7.50"], [372, "7.00"], [403, "6.50"], [434, "6.00"], [467, "5.50"], [498, "5.00"]]} /></Axis>
          </Pane>

          <Pane $h={58}>
            <PaneBody>
              <VolumePlot />
              <PaneHead><Fold /><Name>成交量指标(5,90)</Name><Reading $c="#c8c8c8">VVOL: -</Reading>
                <Reading $c="#ff0" $gap={13}>VOLUME: 123308.27</Reading><Reading $c="#ff0">MAVOL1: 93873.98</Reading><Reading $c="#e000e0">MAVOL2: 98446.12</Reading></PaneHead>
            </PaneBody>
            <Axis>
              <Plot top={529}>
                <path d="M0 556.500h7M0 567.500h41.500V587" stroke={LINE} fill="none" />
                <text x="55" y="562" textAnchor="end" fill="#e02c2c" fontSize="15">10000</text>
                <text x="2" y="582" fill="#e02c2c" fontSize="15">X100</text>
              </Plot>
            </Axis>
          </Pane>

          <Pane $h={113}>
            <PaneBody>
              <ControlPlot />
              <PaneHead><Fold /><Name>ZJTJ</Name><Reading $c="#fff" $gap={13}>无庄控盘: 0.00</Reading><Reading $c="#ff0">开始控盘: 0.00</Reading>
                <Reading $c="#f00" $gap={13}>有庄控盘: 2.74</Reading><Reading $c="#f0f" $gap={13}>高度控盘: 0.00</Reading><Reading $c="#0d0" $gap={13}>主力出货: 0.00</Reading></PaneHead>
            </PaneBody>
            <Axis><AxisPlot top={587} marks={[[631, "15.00"]]} /></Axis>
          </Pane>

          <Pane $h={115}>
            <PaneBody>
              <BsPlot />
              <PaneHead><Fold /><Name>操盘手BS点</Name><Reading $c="#fff" $gap={57}>强: 5.64</Reading><Reading $c="#0000e8">阻: 5.58</Reading>
                <Reading $c="#e000e0">撑: 5.46</Reading><Reading $c="#0e0">底: 5.40</Reading></PaneHead>
            </PaneBody>
            <Axis><AxisPlot top={700} marks={[[744, "10.00"], [778, "7.50"]]} minor={[762, 795]} /></Axis>
          </Pane>

          <Pane $h={127}>
            <PaneBody>
              <EscapePlot />
              <PaneHead><Fold /><Name>逃顶王</Name><Reading $c="#00b4b4">阶段卖出: 3.20</Reading><Reading $c="#e07000">: 3.50</Reading>
                <Reading $c="#ff70ff">清仓卖出: 3.50</Reading><Reading $c="#80c860" $gap={19}>底部: 0.20</Reading><Reading $c="#ff0">关注: 0.50</Reading>
                <Reading $c="#80d868" $gap={32}>强弱分界线: 1.75</Reading><Reading $c="#b0b0b0">数值: 3.04</Reading></PaneHead>
            </PaneBody>
            <Axis $picked><AxisPlot top={815} marks={[[854, "3.00"], [898, "1.50"]]} minor={[877]} /></Axis>
          </Pane>

          <Strip $h={20}><PaneBody><DatePlot /></PaneBody><Corner>日线</Corner></Strip>
          <Strip $h={21}>
            <StripBody><Tab $w={45}>指标A</Tab><Tab $w={45}>指标B</Tab><Tab $w={45}>模 板</Tab><Tab $w={39} $on>管理</Tab><Tab $w={55}>另存为</Tab><Tab $w={55}>绑定到</Tab></StripBody>
            <Corner><Zoom>+</Zoom><Zoom>−</Zoom></Corner>
          </Strip>
          <Strip $h={22}>
            <StripBody><Tab $w={50}>扩展∧</Tab><Tab $w={70}>关联报价</Tab></StripBody>
            <Corner><Side>侧边栏《</Side></Corner>
          </Strip>
        </Left>

        <Quote>
          <Stock><Flag>L</Flag>002551<StockName>尚荣医疗</StockName></Stock>
          <Pairs rows={[["委比", "12.12%", R, "委差", "1257", R]]} h={24} />
          <Book rows={ASKS} />
          <Book rows={BIDS} />
          <Pairs rows={STATS} h={24} />
          <Pairs rows={FUNDS} h={25} />
          <FlowBox>
            <FlowRow><FlowName>净流入额</FlowName><FlowBar $c={R} style={{ width: 75 }} /><FlowVal $c={R}>{withUnit("236.6万")}</FlowVal><FlowPct $c={R}>2%</FlowPct></FlowRow>
            <FlowRow><FlowName>大宗流入</FlowName><FlowBar $c={G} style={{ width: 64 }} /><FlowVal $c={G}>{withUnit("-203.9万")}</FlowVal><FlowPct $c={G}>-2%</FlowPct></FlowRow>
          </FlowBox>
          <Ticks>
            <TickTable>
              <colgroup><col style={{ width: 60 }} /><col style={{ width: 85 }} /><col style={{ width: 85 }} /><col style={{ width: 40 }} /><col /></colgroup>
              <tbody>
                {TICKS.map(([t, p, v, s, n], i) => (
                  <tr key={i}><td>{t}</td><Val $c={R}>{p}</Val><Val $c={+v > 500 ? P : Y}>{v}</Val><Val $c={s === "S" ? G : R}>{s === "-" ? "" : s}</Val><td>{n}</td></tr>
                ))}
              </tbody>
            </TickTable>
          </Ticks>
          <PenRow><PenTab>笔</PenTab></PenRow>
        </Quote>
      </Body>

      <LyricLayer><Lyric>把心慢慢地释怀</Lyric></LyricLayer>

      <Ime>
        <ImeLogo width="36" height="34" viewBox="0 0 36 34">
          <path d="M1 5Q1 3 4 3L27 0Q30 0 31 3L35 26Q35 29 32 30L12 34Q9 34 8 31Z" fill="#f4511e" />
          <path d="M27 8C20 5 10 7 9 12s14 4 17 8-7 8-17 4" fill="none" stroke="#fff" strokeWidth="4.500" strokeLinecap="round" />
        </ImeLogo>
        <ImeButton>中</ImeButton>
        <ImeButton aria-label="标点"><svg width="20" height="20"><circle cx="6" cy="6" r="2.500" fill="none" stroke={BLUE} strokeWidth="1.800" /><path d="M12 11a2.500 2.500 0 1 1 4 2q-.5 3-3 4 1-2 .5-3.500z" fill={BLUE} /></svg></ImeButton>
        <ImeButton aria-label="表情"><svg width="20" height="20" fill="none" stroke={BLUE} strokeWidth="2"><circle cx="10" cy="10" r="8.500" /><path d="M5.500 11.500q4.500 6 9 0" /><path d="M7 6v3M13 6v3" /></svg></ImeButton>
        <ImeButton aria-label="语音"><svg width="18" height="20" fill="none" stroke={BLUE} strokeWidth="2"><rect x="6" y="1" width="6" height="11" rx="3" fill={BLUE} /><path d="M2.500 9q0 6.500 6.500 6.500T15.500 9M9 15v4M5 18.500h8" /></svg></ImeButton>
        <ImeButton aria-label="键盘"><svg width="20" height="16" fill="none" stroke={BLUE} strokeWidth="1.800"><rect x="1" y="1" width="18" height="14" rx="2" /><path d="M3.500 5h13M3.500 8.500h13" strokeDasharray="2 1.300" /><path d="M6 12h8" /></svg></ImeButton>
        <ImeButton aria-label="用户"><svg width="20" height="20" fill="#b8c4d8"><circle cx="8" cy="4" r="3.500" /><path d="M1 16q0-8 7-8 6 0 7 3H9v6H1z" /><path d="M10 12h9v7h-9zM12 14v3M15 14h2v3h-2z" stroke="#fff" /></svg></ImeButton>
        <ImeButton aria-label="皮肤"><svg width="18" height="18"><path d="M5 1q4 3 8 0l5 4-2.500 4-2-1v9h-9V8l-2 1L0 5z" fill={BLUE} /></svg></ImeButton>
        <ImeButton aria-label="工具箱"><svg width="18" height="18" fill={BLUE}><rect x="1" y="1" width="7" height="7" /><rect x="11" y="2" width="5.500" height="5.500" fill="none" stroke={BLUE} strokeWidth="1.500" /><rect x="1" y="10" width="7" height="7" /><rect x="10" y="10" width="7" height="7" /></svg></ImeButton>
      </Ime>
    </App_>
  );
}
